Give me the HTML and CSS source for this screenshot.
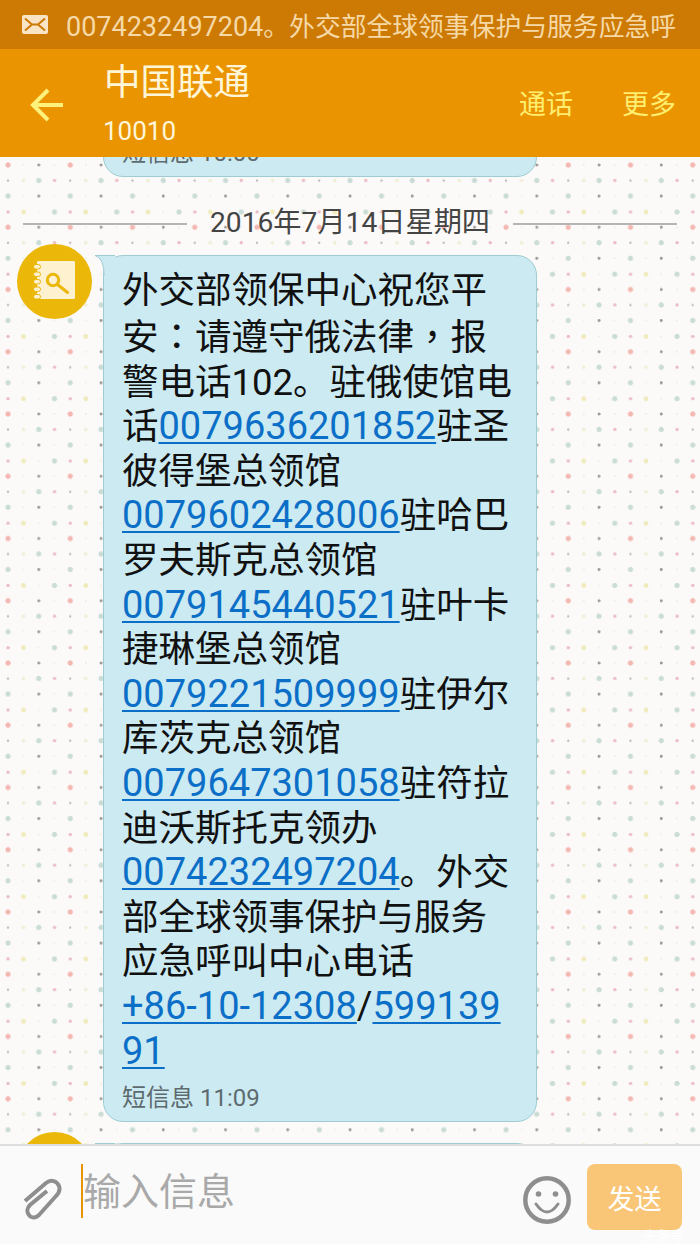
FILE: index.html
```html
<!DOCTYPE html>
<html lang="zh-CN">
<head>
    <meta charset="UTF-8">
    <meta name="viewport" content="width=device-width, initial-scale=1.0">
    <title>中国联通</title>
    <link rel="stylesheet" href="styles.css">
</head>
<body>
    <div class="screen">
        <div class="notify-bar">
            <svg class="notify-icon" width="26" height="19" viewBox="0 0 26 19">
                <rect width="26" height="19" rx="2" fill="#fae4c6"/>
                <path d="M3 3.5 L10 9.5 H16 L23 3.5 M3 15.5 L10 9.5 M23 15.5 L16 9.5" fill="none" stroke="#cc7a04" stroke-width="2"/>
            </svg>
            <div class="notify-text"><span class="notify-num">0074232497204</span>。外交部全球领事保护与服务应急呼</div>
        </div>

        <div class="top-bar">
            <svg class="back-icon" width="34" height="34" viewBox="0 0 34 34">
                <path d="M33 17 H4 M18 2 L3 17 L18 32" fill="none" stroke="#fff27c" stroke-width="4"/>
            </svg>
            <div class="contact">
                <div class="contact-name">中国联通</div>
                <div class="contact-num">10010</div>
            </div>
            <div class="top-action">通话</div>
            <div class="top-action">更多</div>
        </div>

        <div class="thread">
            <div class="bubble bubble-cut">
                <div class="msg-time">短信息 10:00</div>
            </div>

            <div class="date-row">
                <span class="date-line"></span>
                <span class="date-text">2016年7月14日星期四</span>
                <span class="date-line"></span>
            </div>

            <div class="message-row">
                <svg class="avatar" width="75" height="75" viewBox="0 0 75 75">
                    <circle cx="37.5" cy="37.5" r="37.5" fill="#ebb708"/>
                    <rect x="20" y="17" width="38" height="38" rx="1" fill="#fdf1cf"/>
                    <g fill="#fdf1cf" stroke="#ebb708" stroke-width="1">
                        <rect x="16.5" y="20.5" width="7" height="4.5" rx="2.2"/>
                        <rect x="16.5" y="28" width="7" height="4.5" rx="2.2"/>
                        <rect x="16.5" y="35.5" width="7" height="4.5" rx="2.2"/>
                        <rect x="16.5" y="43" width="7" height="4.5" rx="2.2"/>
                        <rect x="16.5" y="50.5" width="7" height="4.5" rx="2.2"/>
                    </g>
                    <circle cx="36" cy="36" r="5.7" fill="none" stroke="#ebb708" stroke-width="3"/>
                    <path d="M40.5 40.5 L50.5 48.5" stroke="#ebb708" stroke-width="3" stroke-linecap="round"/>
                </svg>
                <div class="bubble">
                    <svg class="bubble-tail" width="21" height="22" viewBox="0 0 21 22">
                        <path d="M1 .5 H21 V21 H10 C10 10 8 3 1 .5 Z" fill="#cbeaf1"/>
                        <path d="M21 .5 H1 C8 3 10 10 10 21" fill="none" stroke="#9fcbd3"/>
                    </svg>
                    <div class="msg-text">外交部领保中心祝您平<br>安<span class="punct" lang="zh-TW">：</span>请遵守俄法律<span class="punct" lang="zh-TW">，</span>报<br>警电话102。驻俄使馆电<br>话<a class="tel">0079636201852</a>驻圣<br>彼得堡总领馆<br><a class="tel">0079602428006</a>驻哈巴<br>罗夫斯克总领馆<br><a class="tel">0079145440521</a>驻叶卡<br>捷琳堡总领馆<br><a class="tel">0079221509999</a>驻伊尔<br>库茨克总领馆<br><a class="tel">0079647301058</a>驻符拉<br>迪沃斯托克领办<br><a class="tel">0074232497204</a>。外交<br>部全球领事保护与服务<br>应急呼叫中心电话<br><a class="tel">+86-10-12308</a><span class="slash">/</span><a class="tel">599139</a><br><a class="tel">91</a></div>
                    <div class="msg-time">短信息 11:09</div>
                </div>
            </div>

            <div class="message-row">
                <svg class="avatar" width="75" height="75" viewBox="0 0 75 75">
                    <circle cx="37.5" cy="37.5" r="37.5" fill="#ebb708"/>
                </svg>
                <div class="bubble">
                    <svg class="bubble-tail" width="21" height="22" viewBox="0 0 21 22">
                        <path d="M1 .5 H21 V21 H10 C10 10 8 3 1 .5 Z" fill="#cbeaf1"/>
                        <path d="M21 .5 H1 C8 3 10 10 10 21" fill="none" stroke="#9fcbd3"/>
                    </svg>
                    <div class="msg-text">&nbsp;</div>
                </div>
            </div>
        </div>

        <div class="composer">
            <svg class="clip-icon" width="40" height="42" viewBox="0 0 40 42">
                <path d="M3 23 L24 5 C29 1 35 3 37 8 C38.5 12 37 15 34 18 L17 37 C13.5 40.5 9 40 7 37 C4.5 34 5 30 8 27 L25 13" fill="none" stroke="#8e8e8e" stroke-width="4"/>
            </svg>
            <div class="msg-input">输入信息</div>
            <svg class="smile-icon" width="48" height="48" viewBox="0 0 48 48">
                <circle cx="24" cy="24" r="21.7" fill="none" stroke="#8e8e8e" stroke-width="4.5"/>
                <circle cx="15.5" cy="18" r="2.8" fill="#8e8e8e"/>
                <circle cx="32.5" cy="18" r="2.8" fill="#8e8e8e"/>
                <path d="M13 28 Q24 44 35 28" fill="none" stroke="#8e8e8e" stroke-width="3" stroke-linecap="round"/>
            </svg>
            <button class="send-btn" type="button">发送</button>
            <span class="watermark">头条号</span>
        </div>
    </div>
</body>
</html>
```

FILE: styles.css
```css
:root {
    --bar-dark: #cc7a04;
    --bar: #e99400;
    --bubble: #cbeaf1;
    --bubble-border: #9fcbd3;
    --link: #0b6fc8;
}

html, body { margin: 0; padding: 0; }
body { font-family: Roboto, "Noto Sans CJK SC", sans-serif; background: #fafafa; }

.screen {
    width: 700px;
    height: 1244px;
    display: flex;
    flex-direction: column;
    overflow: hidden;
}

.notify-bar {
    height: 49px;
    flex: none;
    background: var(--bar-dark);
    color: #f6d9a6;
    display: flex;
    align-items: center;
    padding-left: 22px;
    box-sizing: border-box;
}
.notify-icon { flex: none; margin-right: 18px; }
.notify-text { font-size: 25.8px; white-space: nowrap; }
.notify-num { font-size: 27px; }

.top-bar {
    height: 108px;
    flex: none;
    background: var(--bar);
    display: flex;
    align-items: center;
    position: relative;
    z-index: 2;
    padding-right: 24px;
    box-sizing: border-box;
}
.back-icon { flex: none; margin: 4px 41px 0 30px; }
.contact { flex: 1; color: #fff; padding-top: 3px; margin-left: -1px; }
.contact-name { font-size: 36.5px; line-height: 52px; color: #fff6d8; }
.contact-num { font-size: 26px; line-height: 22px; margin: 11px 0 11px -1px; color: #fff6d8; }
.top-action { font-size: 27px; color: #ffee70; margin-left: 49px; margin-bottom: 2px; }

.thread {
    flex: 1;
    min-height: 0;
    overflow: hidden;
    background-color: #fbfaf8;
    background-image:
        radial-gradient(circle at 8px 40.5px, #f4b8b3 2.2px, transparent 3px),
        radial-gradient(circle at 38.75px 40.5px, #9a9694 1.1px, transparent 1.8px),
        radial-gradient(circle at 23.5px 40.5px, #efedea .7px, transparent 1.3px),
        radial-gradient(circle at 54.5px 40.5px, #efedea .7px, transparent 1.3px),
        radial-gradient(circle at 38.75px 56px, #cadcd6 2.2px, transparent 3px),
        radial-gradient(circle at 54.5px 56px, #ebbcc4 1.3px, transparent 2px),
        radial-gradient(circle at 8px 56px, #bdb9b7 .8px, transparent 1.5px),
        radial-gradient(circle at 23.5px 56px, #f1eed8 1.4px, transparent 2.2px),
        radial-gradient(circle at 8px 9.25px, #cadcd6 2.2px, transparent 3px),
        radial-gradient(circle at 38.75px 9.25px, #9a9694 1.1px, transparent 1.8px),
        radial-gradient(circle at 54.5px 9.25px, #efedea .7px, transparent 1.3px),
        radial-gradient(circle at 23.5px 9.25px, #efedea .7px, transparent 1.3px),
        radial-gradient(circle at 23.5px 25.25px, #f0ebbc 2px, transparent 2.8px),
        radial-gradient(circle at 54.5px 25.25px, #cadcd6 2.2px, transparent 3px),
        radial-gradient(circle at 8px 25.25px, #ebbcc4 1.3px, transparent 2px),
        radial-gradient(circle at 38.75px 25.25px, #efedea .7px, transparent 1.3px);
    background-size: 62.25px 62.25px;
    background-position: 0 -32.5px;
}

.bubble {
    position: relative;
    width: 434px;
    box-sizing: border-box;
    background: var(--bubble);
    border: 1px solid var(--bubble-border);
    border-radius: 20px;
    padding: 12.5px 19px 7px 18px;
}
.bubble-cut {
    height: 60px;
    margin: -40px 0 0 103px;
    display: flex;
    flex-direction: column;
    justify-content: flex-end;
}
.bubble-cut .msg-time { line-height: 24px; margin-bottom: 4px; }
.bubble-tail { position: absolute; left: -10px; top: -1px; }

.date-row {
    height: 44px;
    margin-top: 23px;
    padding: 0 23px;
    display: flex;
    align-items: center;
    justify-content: space-between;
}
.date-text { font-size: 28.2px; line-height: 40px; margin-top: 2px; color: #444; white-space: nowrap; }
.date-line { width: 164px; height: 2px; margin-top: 4px; background: #b5b5b5; }

.message-row {
    display: flex;
    align-items: flex-start;
    margin-bottom: 10px;
    padding-left: 17px;
}
.avatar { flex: none; margin-right: 11px; }
.message-row .bubble { margin-top: 11px; }

.msg-text {
    position: relative;
    font-size: 36.5px;
    line-height: 44.6px;
    color: #111;
    white-space: nowrap;
}
.msg-text .punct { font-family: "Noto Sans CJK TC", sans-serif; }
.tel {
    font-size: 38px;
    line-height: 1px;
    color: var(--link);
    text-decoration: underline;
    text-decoration-thickness: 2px;
    text-underline-offset: 3px;
}
.slash { font-size: 38px; line-height: 1px; }
.msg-time {
    margin-top: 8px;
    font-size: 24px;
    line-height: 32px;
    color: #5d6a6f;
}

.composer {
    height: 100px;
    flex: none;
    box-sizing: border-box;
    border-top: 2px solid #dedede;
    background: #fafafa;
    display: flex;
    align-items: flex-start;
    padding: 18px 18px 0 22px;
    position: relative;
    z-index: 2;
}
.clip-icon { flex: none; margin-top: 14px; margin-right: 19px; }
.msg-input {
    flex: 1;
    height: 54px;
    border-left: 2px solid var(--bar);
    font-size: 38px;
    line-height: 56px;
    color: #a9a9a9;
}
.smile-icon { flex: none; margin: 12px 16px 0 0; }
.send-btn {
    flex: none;
    width: 95px;
    height: 66px;
    border: none;
    border-radius: 8px;
    padding: 0;
    background: #f9c677;
    color: #fff;
    font-family: inherit;
    font-size: 27px;
}
.watermark {
    position: absolute;
    right: 16px;
    top: 82px;
    font-size: 14px;
    line-height: 16px;
    color: #fff;
}
```
